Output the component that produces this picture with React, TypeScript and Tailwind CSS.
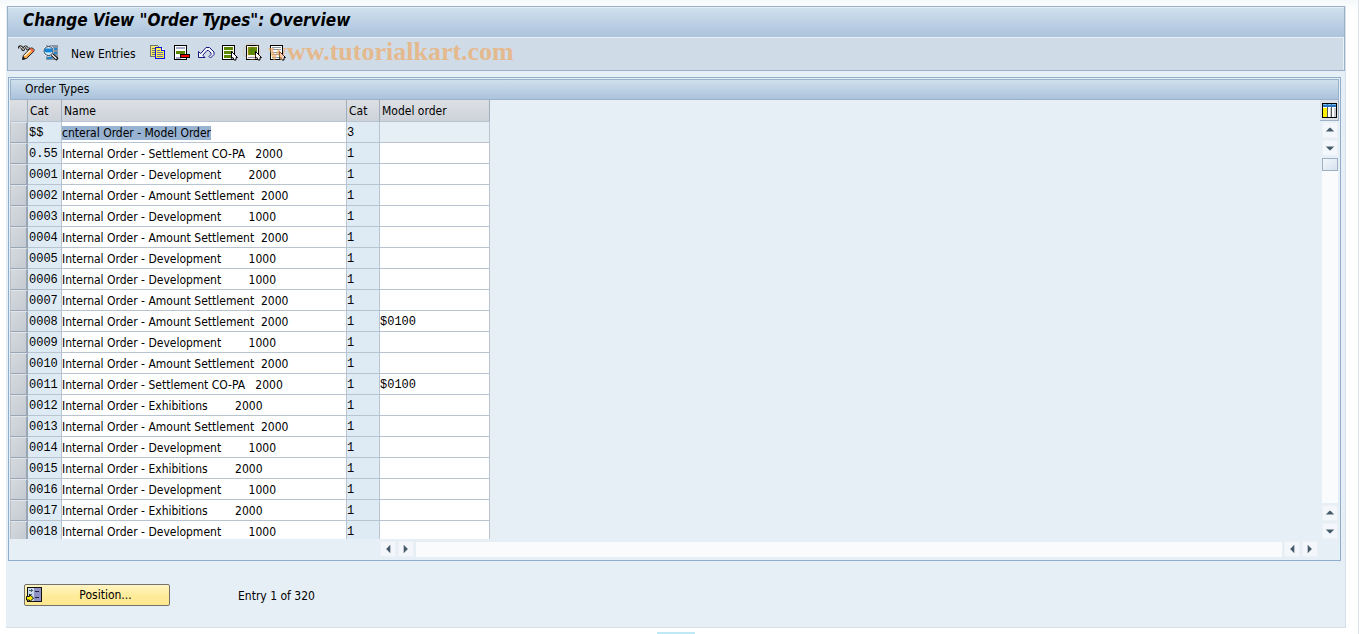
import { useState } from "react";
import type { ReactNode } from "react";

type OrderType = { cat: string; name: string; category: string; model: string };

const DEV_1000 = "Internal Order - Development        1000";
const DEV_2000 = "Internal Order - Development        2000";
const AMOUNT = "Internal Order - Amount Settlement  2000";
const COPA = "Internal Order - Settlement CO-PA   2000";
const EXHIB = "Internal Order - Exhibitions        2000";

const initialRows: OrderType[] = [
  { cat: "$$", name: "cnteral Order - Model Order", category: "3", model: "" },
  { cat: "0.55", name: COPA, category: "1", model: "" },
  { cat: "0001", name: DEV_2000, category: "1", model: "" },
  { cat: "0002", name: AMOUNT, category: "1", model: "" },
  { cat: "0003", name: DEV_1000, category: "1", model: "" },
  { cat: "0004", name: AMOUNT, category: "1", model: "" },
  { cat: "0005", name: DEV_1000, category: "1", model: "" },
  { cat: "0006", name: DEV_1000, category: "1", model: "" },
  { cat: "0007", name: AMOUNT, category: "1", model: "" },
  { cat: "0008", name: AMOUNT, category: "1", model: "$0100" },
  { cat: "0009", name: DEV_1000, category: "1", model: "" },
  { cat: "0010", name: AMOUNT, category: "1", model: "" },
  { cat: "0011", name: COPA, category: "1", model: "$0100" },
  { cat: "0012", name: EXHIB, category: "1", model: "" },
  { cat: "0013", name: AMOUNT, category: "1", model: "" },
  { cat: "0014", name: DEV_1000, category: "1", model: "" },
  { cat: "0015", name: EXHIB, category: "1", model: "" },
  { cat: "0016", name: DEV_1000, category: "1", model: "" },
  { cat: "0017", name: EXHIB, category: "1", model: "" },
  { cat: "0018", name: DEV_1000, category: "1", model: "" },
];

function Icon({ children }: { children: ReactNode }) {
  return (
    <svg width="16" height="16" viewBox="0 0 16 16" fill="none" shapeRendering="crispEdges" aria-hidden="true">
      {children}
    </svg>
  );
}

const PencilIcon = () => (
  <svg width="17" height="16" viewBox="0 0 17 16" fill="none" aria-hidden="true">
    <path d="M1 3.500C1 1 3.500 .8 4 3s1.500 2.500 2 .5S8.500 1 9 3s1.500 1.500 2-.5" stroke="#222" strokeWidth="2.6" />
    <path d="M1.500 3.500C1.500 1.500 3.300 1.300 4 3s1.500 2.500 2 .5S8.500 1 9 3s1 1 1.500 0" stroke="#fff" strokeWidth="1" />
    <path d="M4.500 14.500l.8-4L12.800 3h1.700l1.500 1.500v1.700L8.500 13.500z" fill="#f9a53f" stroke="#1c1c2c" />
    <path d="M6.500 11L13 4.500" stroke="#fff3d8" strokeWidth="1.500" />
    <path d="M12.500 3.500l3 3" stroke="#ee5f45" strokeWidth="2" />
    <path d="M4.500 14.500l.7-3 2.300 2.300z" fill="#111" />
  </svg>
);

const DisplayIcon = () => (
  <svg width="17" height="16" viewBox="0 0 17 16" fill="none" aria-hidden="true">
    <path d="M4 0h12v15H4z" fill="#8795a5" />
    <path d="M12 3h3v2h-3zM12 7h3v2h-3zM5 12h5v2H5z" fill="#2386c8" />
    <circle cx="6.500" cy="6" r="5.500" fill="#fff" />
    <circle cx="6.500" cy="6" r="4.500" fill="#d3eefa" stroke="#27364a" />
    <path d="M3 3.500h7.500v3.500H2.500z" fill="#1584d4" />
    <path d="M4 7.500h5" stroke="#7cc5ec" />
    <path d="M10 9.500l5.500 5" stroke="#111" strokeWidth="3.200" />
    <path d="M10 9.500l4.500 4.200" stroke="#fff" strokeWidth="1.200" />
  </svg>
);

const CopyIcon = () => (
  <Icon>
    <path d="M.5 .5h7l2 2v9h-9z" fill="#f5ea6a" stroke="#6f7472" />
    <path d="M2 3.500h4M2 5.500h4M2 7.500h4M2 9.500h4" stroke="#6f7472" />
    <path d="M5.500 2.500h6l3 3v8h-9z" fill="#fbf04c" stroke="#0a12e8" />
    <path d="M11.500 2.500v3h3" fill="#fff" stroke="#0a12e8" />
    <path d="M7 5.500h3M7 7.500h6M7 9.500h6M7 11.500h6" stroke="#6c6da8" />
  </Icon>
);

const Sheet = () => <path d="M.5 .5h12v14H.5z" fill="#fff" stroke="#000" />;
const Pointer = () => (
  <path d="M9.500 6.500v7l1.500-1 1 2.500h2v-2.500h1.500z" fill="#fff" stroke="#000" shapeRendering="auto" />
);

const DeleteIcon = () => (
  <Icon>
    <Sheet />
    <path d="M2 3h9M2 13h5" stroke="#a8abc8" strokeWidth="2" />
    <path d="M2 6h9v3H2z" fill="#5c8800" />
    <path d="M6 9h10v4H6z" fill="#000" />
    <path d="M7 10h8v2H7z" fill="#f00" />
  </Icon>
);

const UndoIcon = () => (
  <svg width="17" height="16" viewBox="0 0 17 16" fill="none" aria-hidden="true">
    <path
      d="M.5 6.500v6h6.500l-2.200-2.200L9 5.500h1.500l2.500 2.500v1.500l-2 2 1.500 1.500 3.500-3.500V7L11.500 2.500H8L2.800 8.500z"
      fill="#f2f6fb"
      stroke="#16167e"
    />
  </svg>
);

const SelectAllIcon = () => (
  <Icon>
    <Sheet />
    <path d="M2 2h9v3H2zM2 6h9v3H2zM2 10h9v3H2z" fill="#5c8800" />
    <Pointer />
  </Icon>
);

const SelectBlockIcon = () => (
  <Icon>
    <Sheet />
    <path d="M2 2h9v8H2z" fill="#5c8800" />
    <path d="M2 12.500h8" stroke="#8d94a5" />
    <Pointer />
  </Icon>
);

const DeselectIcon = () => (
  <Icon>
    <Sheet />
    <path d="M2 2.500h9M2 4.500h9M2 7.500h9M2 9.500h9M2 12.500h9" stroke="#8798a5" />
    <Pointer />
  </Icon>
);

const ColumnsIcon = () => (
  <svg width="15" height="15" viewBox="0 0 15 15" shapeRendering="crispEdges" aria-hidden="true">
    <path d="M0 0h15v15H0z" fill="#000" />
    <path d="M1 1h13v13H1z" fill="#fff" />
    <path d="M1 1h13v3H1z" fill="#2875bd" />
    <path d="M1 1h4v1H1zM6 1h3v1H6zM10 1h4v1h-4z" fill="#7db9e8" />
    <path d="M1 5h4v9H1z" fill="#fff000" />
    <path d="M5 4h1v10H5zM9 4h1v10H9z" fill="#555" />
    <path d="M8 5h1v9H8zM12 5h2v9h-2z" fill="#c8ccd2" />
  </svg>
);

const PositionIcon = () => (
  <svg width="16" height="16" viewBox="0 0 16 16" fill="none" shapeRendering="crispEdges" aria-hidden="true">
    <path d="M1.500 .5h14v14h-14z" fill="#c9d8e6" stroke="#111" />
    <path d="M8 1h7v13H8z" fill="#8f90c4" />
    <path d="M9 4.500h4M9 10.500h4" stroke="#20223f" />
    <path d="M3 3.500h4M5.500 2v3M3 7.500h3" stroke="#4d6070" />
    <path d="M.5 9.500h3v-2l4 3.500-4 4v-2h-3z" fill="#ffeb00" stroke="#111" shapeRendering="auto" />
  </svg>
);

const arrows = {
  up: "M3 9h9L8 5H7z",
  down: "M3 6h9L8 10H7z",
  left: "M10 3v9L6 8V7z",
  right: "M5 3v9l4-4V7z",
};

function ScrollButton({ dir }: { dir: keyof typeof arrows }) {
  return (
    <button aria-label={`Scroll ${dir}`} className="size-4 shrink-0 border border-[#edf1f5] bg-[#f3f7fb]">
      <svg width="14" height="14" viewBox="0 0 15 15" aria-hidden="true">
        <path d={arrows[dir]} fill="#465c6a" />
      </svg>
    </button>
  );
}

const tools = [
  { label: "Copy as", icon: <CopyIcon /> },
  { label: "Delete", icon: <DeleteIcon /> },
  { label: "Undo change", icon: <UndoIcon /> },
  { label: "Select all", icon: <SelectAllIcon /> },
  { label: "Select block", icon: <SelectBlockIcon /> },
  { label: "Deselect all", icon: <DeselectIcon /> },
];

const th = "border-r border-b border-[#b9c4d1] border-r-[#9faebd] bg-linear-to-b from-[#dde0e3] to-[#cdd2da] px-0.5 pt-px text-left font-normal";
const cell = "border-r border-b border-[#b9c4d1] px-0 pb-0";
const field = "block h-5 bg-transparent pt-0.5 outline-none";
const mono = "font-['Liberation_Mono',monospace]";

export default function App() {
  const [rows, setRows] = useState(initialRows);

  const handleChange = (index: number, key: "name" | "model", value: string) => {
    setRows(rows.map((r, i) => (i === index ? { ...r, [key]: value } : r)));
  };

  return (
    <div className="min-h-screen border-r border-[#dfe3e8] bg-linear-to-b from-[#f5f8fb] to-white to-[12px] pt-1.5 pr-3 pl-1.5 font-['DejaVu_Sans_Condensed','DejaVu_Sans',sans-serif] text-xs text-black">
      <div className="border-r border-b border-[#d8e1ea] bg-[#e7eff6] pb-[21px] pl-px">
        <header className="border border-[#9bb0c6]">
          <h1 className="flex h-[30px] items-center border-t border-[#e4eef6] bg-linear-to-b from-[#cfe0ed] to-[#abc3dc] pb-1 pl-[15px] text-[17px] font-bold italic">
            Change View "Order Types": Overview
          </h1>
          <div className="relative flex h-[33px] items-center border-t border-r border-[#e7f0f7] bg-[#cfdce7] pb-0.5 pl-2.5">
            <button aria-label="Display/Change" className="mr-[7px]"><PencilIcon /></button>
            <button aria-label="Details" className="mr-3"><DisplayIcon /></button>
            <button className="mr-3.5 pt-0.5">New Entries</button>
            <div className="flex gap-2">
              {tools.map((t) => (
                <button key={t.label} aria-label={t.label} className="w-4">{t.icon}</button>
              ))}
            </div>
            <span className="pointer-events-none absolute top-0 left-[234px] font-['Liberation_Serif',serif] text-[26px] leading-7 font-bold whitespace-nowrap text-[#f3a45a]/65">
              <span className="font-normal opacity-50">©</span> www.tutorialkart.com
            </span>
          </div>
        </header>

        {/* Order types table */}
        <section className="mt-1.5 mr-1 ml-px border border-[#8faecb] p-px">
          <h2 className="flex h-[21px] items-center border border-[#9bb0c9] bg-linear-to-b from-[#cfe0ed] to-[#abc3dc] pb-px pl-3.5">Order Types</h2>
          <div className="flex justify-between">
            <div className="h-[439px] overflow-hidden">
              <table className="w-[480px] table-fixed border-separate border-spacing-0">
                <colgroup>
                  <col className="w-[18px]" />
                  <col className="w-[34px]" />
                  <col className="w-[285px]" />
                  <col className="w-[33px]" />
                  <col />
                </colgroup>
                <thead>
                  <tr className="h-[22px]">
                    <th className={th}></th>
                    <th className={th}>Cat</th>
                    <th className={th}>Name</th>
                    <th className={th}>Cat</th>
                    <th className={th}>Model order</th>
                  </tr>
                </thead>
                <tbody>
                  {rows.map((row, i) => (
                    <tr key={row.cat} className="h-[21px]">
                      <td className="p-0">
                        <button
                          aria-label={`Select ${row.cat}`}
                          className="block h-[21px] w-full border-t border-r-2 border-b border-l border-[#98a5b4] border-t-[#e2e5e9] border-l-[#b7c1cc] bg-linear-to-br from-[#d6dade] to-[#c4cad2]"
                        />
                      </td>
                      <td className={`${cell} ${mono} bg-[#deebf5] pt-0.5 pl-px`}>{row.cat}</td>
                      <td className={`${cell} bg-white pt-0`}>
                        <input
                          aria-label={`Name ${row.cat}`}
                          value={row.name}
                          onChange={(e) => handleChange(i, "name", e.target.value)}
                          className={i === 0 ? "mt-px block h-3.5 [field-sizing:content] bg-[#98b2d1] outline-none" : `${field} w-full`}
                        />
                      </td>
                      <td className={`${cell} ${mono} bg-[#deebf5] pt-0.5`}>{row.category}</td>
                      <td className={`${cell} ${i === 0 ? "bg-[#e7eff6]" : "bg-white"} pt-0`}>
                        <input
                          aria-label={`Model order ${row.cat}`}
                          value={row.model}
                          readOnly={i === 0}
                          onChange={(e) => handleChange(i, "model", e.target.value)}
                          className={`${field} ${mono} w-full`}
                        />
                      </td>
                    </tr>
                  ))}
                </tbody>
              </table>
            </div>
            <div className="flex w-[19px] flex-col items-center">
              <button aria-label="Configure columns" className="mb-px flex h-[21px] w-full items-center justify-center border-r border-b border-[#9fb0c4] bg-[#dde2e8]">
                <ColumnsIcon />
              </button>
              <div className="flex w-4 flex-1 flex-col gap-0.5">
                <ScrollButton dir="up" />
                <ScrollButton dir="down" />
                <div className="flex-1 bg-[#fafbfc]">
                  <div className="h-[13px] border border-[#9fb0c2] bg-linear-to-br from-[#f3f7fb] to-[#d5e2ee]" />
                </div>
                <ScrollButton dir="up" />
                <ScrollButton dir="down" />
              </div>
            </div>
          </div>
          <div className="flex h-5 items-center gap-0.5 pr-[21px] pl-[370px]">
            <ScrollButton dir="left" />
            <ScrollButton dir="right" />
            <div className="h-[15px] flex-1 bg-[#fafbfc]" />
            <ScrollButton dir="left" />
            <ScrollButton dir="right" />
          </div>
        </section>

        <footer className="mt-[23px] ml-[17px] flex items-center">
          <button className="flex h-[22px] w-[146px] items-center rounded-xs border border-[#74716a] bg-linear-to-b from-[#fff5c4] via-[#ffec9c] to-[#fce88e] pl-px">
            <PositionIcon />
            <span className="flex-1 text-center">Position...</span>
          </button>
          <span className="ml-[68px] pt-px">Entry 1 of 320</span>
        </footer>
      </div>
      <div className="mx-auto mt-1 h-0.5 w-[38px] bg-[#bfe9f5]" />
    </div>
  );
}
